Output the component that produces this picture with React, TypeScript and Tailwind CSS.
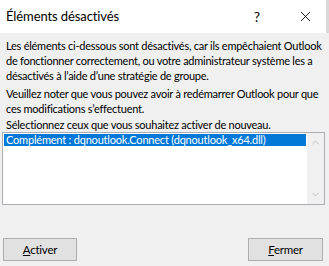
import { ChevronUp, ChevronDown, X } from 'lucide-react';

const font = { fontFamily: 'Lato, "Noto Sans", sans-serif' };

export default function App() {
  return (
    <div className="w-[329px] h-[266px] bg-[#f0f0f0] flex flex-col overflow-hidden text-black" style={font}>
      <div className="h-[33px] bg-white flex items-center pl-[6px] border-r-[3px] border-[#d8d8d8] shrink-0">
        <span className="text-[13px] flex-1 tracking-[-0.1px]">Éléments désactivés</span>
        <span className="text-[14px] w-[12px] mr-[34px] text-center">?</span>
        <X size={17} strokeWidth={1.2} className="mr-[12px]" />
      </div>

      <div className="flex flex-col px-[6px] pt-[5px] text-[11px] tracking-[-0.25px] leading-[15px] whitespace-nowrap">
        <p>
          Les éléments ci-dessous sont désactivés, car ils empêchaient Outlook
          <br />
          de fonctionner correctement, ou votre administrateur système les a
          <br />
          désactivés à l’aide d’une stratégie de groupe.
        </p>
        <p className="mt-[3px]">
          Veuillez noter que vous pouvez avoir à redémarrer Outlook pour que
          <br />
          ces modifications s’effectuent.
        </p>
        <p className="mt-[2px] leading-[14px]">Sélectionnez ceux que vous souhaitez activer de nouveau.</p>

        <div className="-ml-[4px] mr-[-2px] h-[73px] bg-white border border-[#abadb3] flex">
          <div className="flex-1 p-[1px] min-w-0">
            <div className="bg-[#0078d7] text-white h-[12px] flex items-center pl-[2px] leading-[12px] tracking-[-0.2px] overflow-hidden">
              Complément : dqnoutlook.Connect (dqnoutlook_x64.dll)
            </div>
          </div>
          <div className="w-[17px] bg-[#f0f0f0] flex flex-col justify-between items-center py-[4px] text-[#b0b0b0]">
            <ChevronUp size={11} strokeWidth={1.5} />
            <ChevronDown size={11} strokeWidth={1.5} />
          </div>
        </div>

        <div className="flex justify-between mt-[33px] -ml-[3px]">
          <button className="w-[74px] h-[23px] bg-[#e1e1e1] border border-[#adadad] text-[11.5px]">
            <span className="underline">A</span>ctiver
          </button>
          <button className="w-[75px] h-[23px] bg-[#e1e1e1] border border-[#adadad] text-[11.5px]">
            <span className="underline">F</span>ermer
          </button>
        </div>
      </div>
    </div>
  );
}
